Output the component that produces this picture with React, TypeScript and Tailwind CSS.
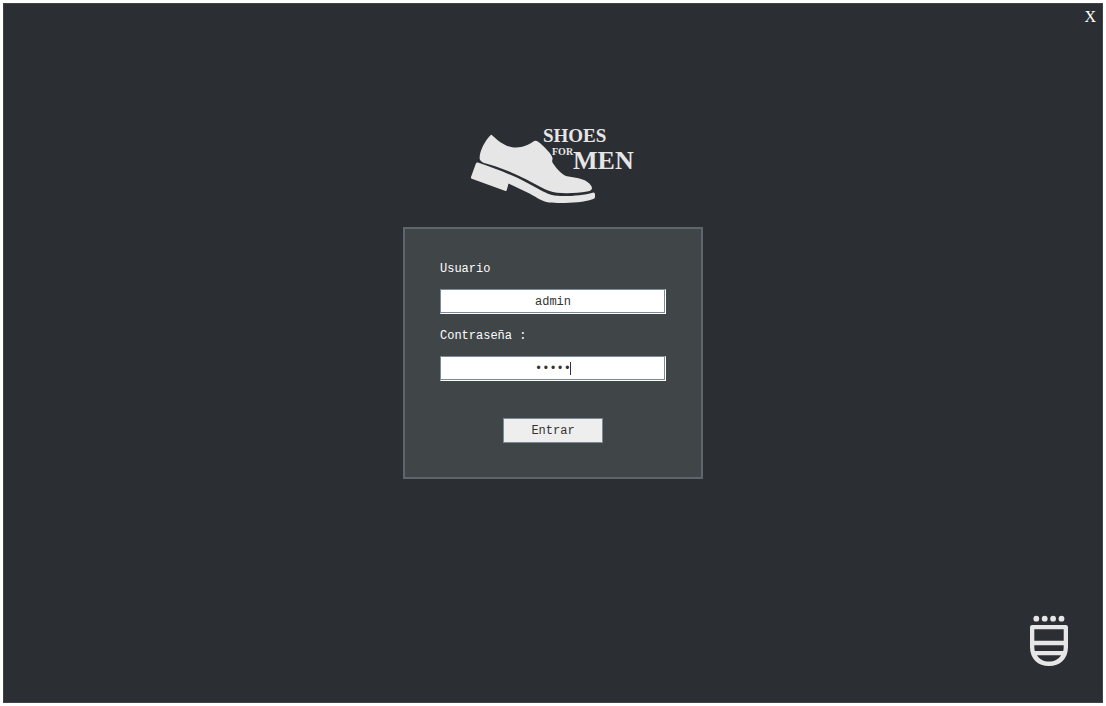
import { useState } from "react";

function ShoeLogo() {
  return (
    <svg
      viewBox="0 0 166 80"
      className="h-20 w-[166px]"
      role="img"
      aria-label="Shoes for men"
      fill="#e6e6e6"
    >
      <path d="M20.5 11.3 Q21.3 10.4 22.3 11.4 C28 16.5 33 21 41 22.9 C50 24.7 57 21.7 63 17.7 Q65.5 16.1 67.8 17.5 C71.5 20 74.5 23 77.5 26.5 C80.5 29.5 82.5 32.5 82.6 35 C81.8 36.8 82 38.3 83.5 40 C86 43.5 91 50.5 97 52.3 C105 53.5 113 54.5 117 57.8 C120.5 60.3 122.5 62.8 121.8 65 C121.2 66.8 119 67.2 117 67.6 C108 69.2 96 69.6 87 68.8 C76 67.2 66 60.2 56 55.2 C42 48.2 27 42.2 14 39 Q9.5 37 9.6 34.2 C9.8 26.2 15 17 20.5 11.3 Z" />
      <path d="M7.8 38.6 C24 43.9 42 50.9 56 58.2 C65 62.6 73 68.4 82 71.1 C91 73.1 112 71.9 122.5 68.7 Q124.8 67.9 125 70.3 L125 73.2 Q124.8 74.6 122.5 75.2 C112 79 91 79.6 79 78.6 C72 77.7 67 73.4 60 69.8 L38.5 59.6 L36.8 66 Q36.4 67.5 34.8 66.8 L1.8 54.7 Q0.6 54.2 1 52.9 L5.8 39.8 Q6.6 38.2 7.8 38.6 Z" />
      <g className="font-['Liberation_Serif',serif] font-bold">
        <text x="73" y="18" fontSize="19">SHOES</text>
        <text x="82" y="31" fontSize="10">FOR</text>
        <text x="103" y="45" fontSize="26">MEN</text>
      </g>
    </svg>
  );
}

function ShieldLogo() {
  return (
    <svg
      viewBox="0 0 40 52"
      className="h-[52px] w-10"
      aria-hidden="true"
      fill="#e6e6e6"
    >
      <circle cx="7.3" cy="3.7" r="2.9" />
      <circle cx="15.7" cy="3.7" r="2.9" />
      <circle cx="24.1" cy="3.7" r="2.9" />
      <circle cx="32.5" cy="3.7" r="2.9" />
      <path
        fillRule="evenodd"
        d="M3.2 10 H36.8 Q39 10 39 12.2 V32 C39 44 31 51 20 51 C9 51 1 44 1 32 V12.2 Q1 10 3.2 10 Z M5.3 14.2 V25.8 H34.7 V14.2 Z M5.3 30.2 V32 Q5.3 34.2 5.8 36 H34.2 Q34.7 34.2 34.7 32 V30.2 Z M8 40.3 C10.5 44.5 15 46.6 20 46.6 C25 46.6 29.5 44.5 32 40.3 Z"
      />
    </svg>
  );
}

const fieldClass =
  "block h-[25px] w-full border border-t-[#7a8a99] border-r-white border-b-white border-l-[#7a8a99] bg-white px-1 text-center text-[#333333] shadow-[inset_-1px_-1px_0_#7a8a99] outline-none";

export default function App() {
  const [user, setUser] = useState("admin");
  const [password, setPassword] = useState("admin");

  return (
    <div className="flex min-h-screen bg-white p-[3px]">
      <main className="relative flex flex-1 flex-col items-center border border-[#3f4448] bg-[#2b2e33] pt-[120px]">
        <button
          type="button"
          aria-label="Cerrar"
          className="absolute top-0 right-0 px-1.5 pt-px font-['Liberation_Serif',serif] text-base text-white"
        >
          X
        </button>

        <ShoeLogo />

        <form
          onSubmit={(e) => e.preventDefault()}
          className="mt-[23px] flex h-[252px] w-[300px] flex-col border-2 border-[#5c666c] bg-[#404548] px-[35px] pt-8 font-['Liberation_Mono',monospace] text-xs text-white"
        >
          <label htmlFor="user" className="mb-3">
            Usuario
          </label>
          <input
            id="user"
            type="text"
            value={user}
            onChange={(e) => setUser(e.target.value)}
            className={fieldClass}
          />
          <label htmlFor="password" className="mt-[14px] mb-3">
            Contraseña :
          </label>
          <div className="relative">
            <input
              id="password"
              type="password"
              value={password}
              onChange={(e) => setPassword(e.target.value)}
              className={fieldClass}
            />
            <span className="absolute top-1.5 left-1/2 ml-[17px] h-[13px] w-px bg-[#333333]" />
          </div>
          <button
            type="submit"
            className="mt-[37px] h-[25px] w-[100px] self-center border border-[#7a8a99] bg-[#eeeeee] text-[#333333]"
          >
            Entrar
          </button>
        </form>

        <div className="absolute right-[33px] bottom-[35px]">
          <ShieldLogo />
        </div>
      </main>
    </div>
  );
}
